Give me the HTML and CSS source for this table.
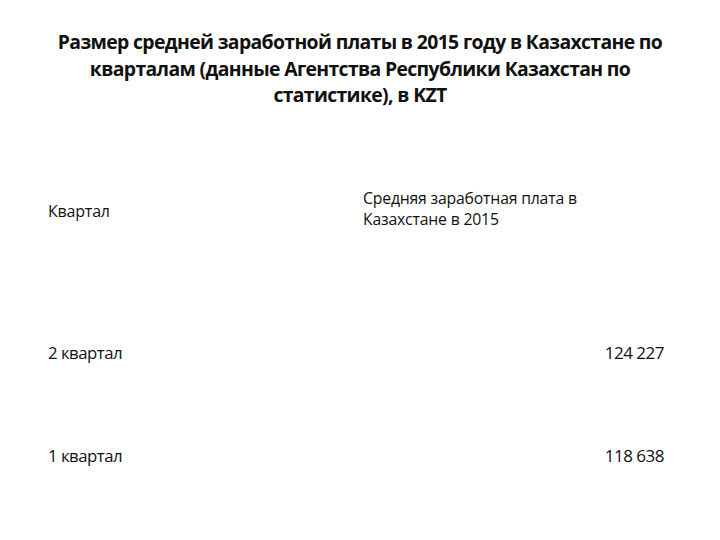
FILE: index.html
```html
<!DOCTYPE html>
<html lang="ru">
<head>
<meta charset="utf-8">
<link rel="stylesheet" href="styles.css">
</head>
<body>
<div class="slide">
  <h1 class="title">Размер средней заработной платы в 2015 году в Казахстане по кварталам (данные Агентства Республики Казахстан по статистике), в KZT</h1>
  <div class="table">
    <div class="row head">
      <div class="c1 hdr1">Квартал</div>
      <div class="c2 hdr2">Средняя заработная плата в<br>Казахстане в 2015</div>
    </div>
    <div class="row r2">
      <div class="c1 val">2 квартал</div>
      <div class="c2 num">124 227</div>
    </div>
    <div class="row r3">
      <div class="c1 val">1 квартал</div>
      <div class="c2 num">118 638</div>
    </div>
  </div>
</div>
</body>
</html>
```
FILE: styles.css
```css
html, body {
  margin: 0;
  padding: 0;
  background: #ffffff;
}
.slide {
  width: 720px;
  height: 540px;
  box-sizing: border-box;
  padding: 29px 56px 0 48px;
  color: #111;
  font-family: "Open Sans", "Noto Sans", sans-serif;
}
.title {
  margin: 0;
  font-size: 19.4px;
  font-weight: 700;
  line-height: 26.5px;
  text-align: center;
  letter-spacing: -0.65px;
  padding: 0 0 0 8px;
}
.table {
  display: flex;
  flex-direction: column;
}
.row {
  display: grid;
  grid-template-columns: 315px 1fr;
}
.head {
  margin-top: 70px;
  height: 60px;
  align-items: center;
}
.hdr1 {
  font-size: 16px;
  letter-spacing: -0.2px;
  padding-top: 4px;
}
.hdr2 {
  font-size: 15.8px;
  line-height: 21px;
  letter-spacing: -0.2px;
}
.r2 {
  margin-top: 102px;
  height: 24px;
  align-items: center;
}
.r3 {
  margin-top: 79px;
  height: 24px;
  align-items: center;
}
.val {
  font-size: 16.8px;
  letter-spacing: -0.5px;
}
.num {
  font-size: 17px;
  text-align: right;
  letter-spacing: -0.5px;
}
```
